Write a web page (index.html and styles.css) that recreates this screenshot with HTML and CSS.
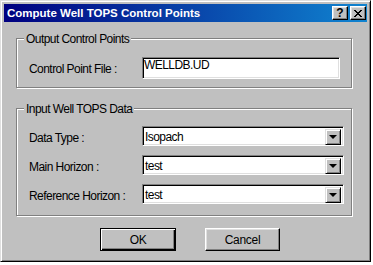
FILE: index.html
```html
<!DOCTYPE html>
<html lang="en">
<head>
    <meta charset="UTF-8">
    <title>Compute Well TOPS Control Points</title>
    <link rel="stylesheet" href="styles.css">
</head>
<body>
    <div class="window">
        <div class="titlebar">
            <span class="title">Compute Well TOPS Control Points</span>
            <div class="title-buttons">
                <button class="tb-btn tb-help">?</button>
                <button class="tb-btn tb-close">
                    <svg width="8" height="7" viewBox="0 0 8 7" shape-rendering="crispEdges">
                        <path d="M0 0h2v1h-2zM6 0h2v1h-2zM1 1h2v1h-2zM5 1h2v1h-2zM2 2h4v1h-4zM3 3h2v1h-2zM2 4h4v1h-4zM1 5h2v1h-2zM5 5h2v1h-2zM0 6h2v1h-2zM6 6h2v1h-2z" fill="#000"/>
                    </svg>
                </button>
            </div>
        </div>

        <div class="dialog-body">
            <div class="group group-output">
                <span class="legend">Output Control Points</span>
                <div class="row">
                    <label class="row-label">Control Point File :</label>
                    <div class="textbox">WELLDB.UD</div>
                </div>
            </div>

            <div class="group group-input">
                <span class="legend">Input Well TOPS Data</span>
                <div class="row">
                    <label class="row-label">Data Type :</label>
                    <div class="combo">
                        <span class="combo-value">Isopach</span>
                        <span class="combo-arrow"><i class="tri"></i></span>
                    </div>
                </div>
                <div class="row">
                    <label class="row-label">Main Horizon :</label>
                    <div class="combo">
                        <span class="combo-value">test</span>
                        <span class="combo-arrow"><i class="tri"></i></span>
                    </div>
                </div>
                <div class="row">
                    <label class="row-label">Reference Horizon :</label>
                    <div class="combo">
                        <span class="combo-value">test</span>
                        <span class="combo-arrow"><i class="tri"></i></span>
                    </div>
                </div>
            </div>

            <div class="actions">
                <button class="btn btn-default">OK</button>
                <button class="btn">Cancel</button>
            </div>
        </div>
    </div>
</body>
</html>
```

FILE: styles.css
```css
:root {
    --face: #c0c0c0;
    --light: #dfdfdf;
    --shadow: #808080;
    --dark: #000;
}

* {
    box-sizing: border-box;
}

body {
    margin: 0;
    background: #fff;
    font-family: "Liberation Sans", Arial, sans-serif;
    font-size: 12px;
    letter-spacing: -0.55px;
    color: #000;
}

.window {
    width: 371px;
    height: 262px;
    background: var(--face);
    border: 1px solid;
    border-color: var(--light) var(--dark) var(--dark) var(--light);
    box-shadow: inset 1px 1px #fff, inset -1px -1px var(--shadow);
    padding: 3px;
}

/* title bar */
.titlebar {
    height: 18px;
    display: flex;
    align-items: center;
    padding: 0 1px 0 3px;
    background: linear-gradient(to right, #000080, #1084d0);
}

.title {
    font-weight: bold;
    font-size: 11.5px;
    letter-spacing: 0;
    color: #fff;
    white-space: nowrap;
}

.title-buttons {
    margin-left: auto;
    display: flex;
    gap: 2px;
}

.tb-btn {
    width: 16px;
    height: 14px;
    padding: 0;
    background: var(--face);
    border: 1px solid;
    border-color: #fff var(--dark) var(--dark) #fff;
    box-shadow: inset -1px -1px var(--shadow), inset 1px 1px var(--light);
    display: flex;
    align-items: center;
    justify-content: center;
    font-family: "Liberation Sans", sans-serif;
    font-weight: bold;
    font-size: 12px;
    line-height: 1;
    color: #000;
}

.tb-close svg {
    display: block;
}

/* body */
.dialog-body {
    padding: 16px 0 0 12px;
}

.group {
    position: relative;
    width: 336px;
    border: 1px solid var(--shadow);
    box-shadow: inset 1px 1px #fff, 1px 1px #fff;
    padding: 18px 0 8px 12px;
}

.legend {
    position: absolute;
    top: -7px;
    left: 7px;
    padding: 0 2px;
    line-height: 14px;
    background: var(--face);
    white-space: nowrap;
}

.group-input {
    margin-top: 20px;
    padding-top: 17px;
    padding-bottom: 11px;
    display: flex;
    flex-direction: column;
    gap: 9px;
}

.row {
    display: flex;
    align-items: flex-start;
}

.row-label {
    width: 113px;
    line-height: 14px;
    margin-top: 5px;
    white-space: nowrap;
}

.textbox {
    width: 198px;
    height: 22px;
    background: #fff;
    border: 1px solid;
    border-color: var(--shadow) #fff #fff var(--shadow);
    box-shadow: inset 1px 1px var(--dark), inset -1px -1px var(--light);
    padding: 0 2px 0 1px;
    line-height: 14px;
}

.combo {
    width: 202px;
    height: 20px;
    display: flex;
    background: #fff;
    border: 1px solid;
    border-color: var(--shadow) #fff #fff var(--shadow);
    box-shadow: inset 1px 1px var(--dark), inset -1px -1px var(--light);
    padding: 2px;
}

.combo-value {
    flex: 1;
    line-height: 16px;
    padding-left: 0;
}

.combo-arrow {
    width: 16px;
    height: 16px;
    background: var(--face);
    border: 1px solid;
    border-color: var(--light) var(--dark) var(--dark) var(--light);
    box-shadow: inset 1px 1px #fff, inset -1px -1px var(--shadow);
    display: flex;
    align-items: center;
    justify-content: center;
}

.tri {
    width: 0;
    height: 0;
    border-left: 4px solid transparent;
    border-right: 4px solid transparent;
    border-top: 4px solid #000;
}

/* buttons */
.actions {
    display: flex;
    gap: 29px;
    margin-top: 12px;
    padding-left: 84px;
}

.btn {
    width: 75px;
    height: 23px;
    padding: 0;
    background: var(--face);
    border: 1px solid;
    border-color: #fff var(--dark) var(--dark) #fff;
    box-shadow: inset -1px -1px var(--shadow), inset 1px 1px var(--light);
    font-family: inherit;
    font-size: 12px;
    letter-spacing: -0.3px;
    color: #000;
}

.btn-default {
    width: 76px;
    border-color: var(--dark);
    box-shadow: inset 1px 1px #fff, inset -1px -1px var(--dark), inset -2px -2px var(--shadow);
}
```
